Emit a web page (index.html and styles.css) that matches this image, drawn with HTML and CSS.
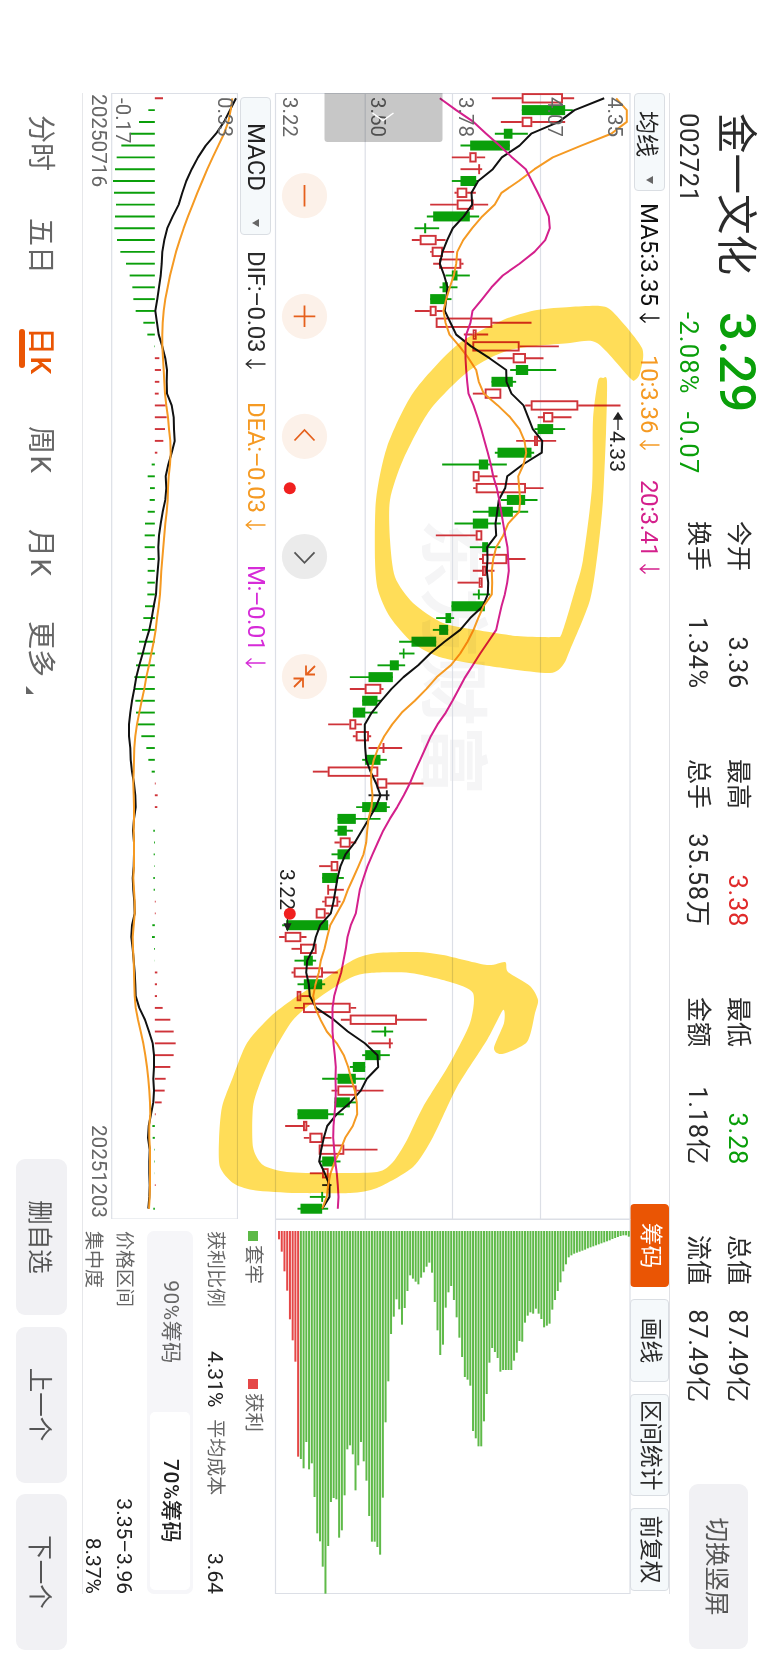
FILE: index.html
```html
<!DOCTYPE html>
<html lang="zh-CN">
<head>
    <meta charset="UTF-8">
    <meta name="viewport" content="width=device-width, initial-scale=1.0">
    <title>金一文化 002721</title>
    <link rel="stylesheet" href="styles.css">
</head>
<body>
<div class="phone">
<div class="screen">

    <header class="header">
        <div class="stock">
            <div class="stock-name">金一文化</div>
            <div class="stock-code">002721</div>
        </div>
        <div class="price">
            <div class="price-now">3.29</div>
            <div class="price-change"><span>-2.08%</span><span>-0.07</span></div>
        </div>
        <div class="quotes">
            <div class="quote"><span>今开</span><b>3.36</b></div>
            <div class="quote"><span>最高</span><b class="up">3.38</b></div>
            <div class="quote"><span>最低</span><b class="down">3.28</b></div>
            <div class="quote"><span>总值</span><b>87.49亿</b></div>
            <div class="quote"><span>换手</span><b>1.34%</b></div>
            <div class="quote"><span>总手</span><b>35.58万</b></div>
            <div class="quote"><span>金额</span><b>1.18亿</b></div>
            <div class="quote"><span>流值</span><b>87.49亿</b></div>
        </div>
        <button class="btn btn-switch">切换竖屏</button>
    </header>

    <div class="toolbar">
        <div class="picker picker-ma">均线<i class="caret"></i></div>
        <div class="ind ind-ma5">MA5:3.35<svg class="arrow" viewBox="0 0 10 20"><path d="M5 0V19M.5 14L5 19.3L9.5 14"/></svg></div>
        <div class="ind ind-ma10">10:3.36<svg class="arrow" viewBox="0 0 10 20"><path d="M5 0V19M.5 14L5 19.3L9.5 14"/></svg></div>
        <div class="ind ind-ma20">20:3.41<svg class="arrow" viewBox="0 0 10 20"><path d="M5 0V19M.5 14L5 19.3L9.5 14"/></svg></div>
        <div class="tools">
            <div class="tool tool-on">筹码</div>
            <div class="tool">画线</div>
            <div class="tool tool-wide">区间统计</div>
            <div class="tool">前复权</div>
        </div>
    </div>

    <div class="main">
        <svg id="priceChart" class="price-chart" viewBox="93 137.5 1126 355">
            <text class="watermark" x="519" y="340">东方财富</text>
            <path class="grid" d="M93 137.5H1219M93 227H1219M93 315H1219M93 402.3H1219M93 492H1219M93.5 137V492M1219 137V492"/>
            <g id="candles"></g>
            <g class="axis">
                <text x="97" y="159.3">4.35</text>
                <text x="97" y="220">4.07</text>
                <text x="97" y="309">3.78</text>
                <text x="97" y="397">3.50</text>
                <text x="97" y="485">3.22</text>
            </g>
            <path class="handle" d="M93 325H139Q142 325 142 328V440Q142 443 139 443H93Z"/>
            <path class="handle-mark" d="M113 374L120.5 384.5L113 395"/>
            <g class="mark">
                <path d="M430 149.5H414M419 145.5L413 149.5L419 153.5Z"/>
                <text x="431" y="157.5">4.33</text>
                <text x="869" y="488">3.22</text>
                <path d="M914 480H926M924 477L930 480L924 483Z"/>
            </g>
            <circle class="dot" cx="488.3" cy="477.7" r="6"/>
            <circle class="dot" cx="913.7" cy="477.7" r="6"/>
            <g class="zoom-btn">
                <circle cx="195.7" cy="463" r="22.6"/><path d="M185 463H206.5"/>
                <circle cx="316.3" cy="463" r="22.6"/><path d="M305.5 463H327M316.3 452.2V473.8"/>
                <circle cx="436.3" cy="463" r="22.6"/><path d="M440.5 453L430 463L440.5 473"/>
                <circle cx="676.5" cy="463" r="22.6"/><path d="M666 452.5L674.5 461M674.5 452.5V461.5H665.5M687 473.5L678.5 465M678.5 474V464.5H687.5"/>
            </g>
            <g class="zoom-btn zoom-btn-off">
                <circle cx="556.5" cy="463" r="22.6"/><path d="M552.3 453L562.8 463L552.3 473"/>
            </g>
        </svg>
        <svg id="chipChart" class="chip-chart" viewBox="1219 137.5 375 355">
            <path class="grid" d="M1219.5 137V492H1593.5V137.5H1219"/>
            <g id="chips"></g>
        </svg>
    </div>

    <div class="lower">
        <div class="macd">
            <div class="macd-bar">
                <div class="picker picker-macd">MACD<i class="caret"></i></div>
                <div class="ind ind-dif">DIF:–0.03<svg class="arrow" viewBox="0 0 10 20"><path d="M5 0V19M.5 14L5 19.3L9.5 14"/></svg></div>
                <div class="ind ind-dea">DEA:–0.03<svg class="arrow" viewBox="0 0 10 20"><path d="M5 0V19M.5 14L5 19.3L9.5 14"/></svg></div>
                <div class="ind ind-m">M:–0.01<svg class="arrow" viewBox="0 0 10 20"><path d="M5 0V19M.5 14L5 19.3L9.5 14"/></svg></div>
            </div>
            <svg id="macdChart" class="macd-chart" viewBox="93 530 1126 127">
                <path class="grid" d="M93.5 530.5H1219V656.3H93.5Z"/>
                <g id="macdBars"></g>
                <g class="axis">
                    <text x="97" y="550.5">0.33</text>
                    <text x="98" y="652">-0.17</text>
                </g>
            </svg>
            <div class="dates"><span>20250716</span><span>20251203</span></div>
        </div>
        <div class="chips-info">
            <div class="legend"><span class="lg lg-green">套牢</span><span class="lg lg-red">获利</span></div>
            <div class="info-row info-pair">
                <span>获利比例</span><b>4.31%</b><span>平均成本</span><b>3.64</b>
            </div>
            <div class="segment"><span>90%筹码</span><span class="segment-on">70%筹码</span></div>
            <div class="info-row"><span>价格区间</span><b>3.35–3.96</b></div>
            <div class="info-row info-last"><span>集中度</span><b>8.37%</b></div>
        </div>
    </div>

    <footer class="footer">
        <nav class="tabs">
            <span>分时</span>
            <span>五日</span>
            <span class="tab-on">日K</span>
            <span>周K</span>
            <span>月K</span>
            <span class="tab-more">更多</span>
        </nav>
        <div class="actions">
            <button class="btn">删自选</button>
            <button class="btn">上一个</button>
            <button class="btn">下一个</button>
        </div>
    </footer>

    <svg id="marker" class="marker" viewBox="0 0 1663 768"></svg>
</div>
</div>
<script src="chart.js"></script>
</body>
</html>
```
FILE: styles.css
```css
* {
    box-sizing: border-box;
}
body {
    margin: 0;
    background: #fff;
    font-family: Roboto, "Noto Sans CJK SC", sans-serif;
    color: #2b2b2b;
}
b {
    font-weight: 400;
}
.phone {
    width: 768px;
    height: 1663px;
    overflow: hidden;
}
/* landscape screen on a portrait page */
.screen {
    position: relative;
    width: 1663px;
    height: 768px;
    transform-origin: 0 0;
    transform: translateX(768px) rotate(90deg);
}

.header {
    display: flex;
    height: 98px;
    padding-left: 113px;
    white-space: nowrap;
}
.stock {
    width: 199px;
}
.stock-name {
    height: 62px;
    font-size: 40.5px;
    line-height: 65px;
}
.stock-code {
    font-size: 25.5px;
    line-height: 34px;
    letter-spacing: .6px;
}
.price {
    width: 210px;
    color: #0a9f0a;
}
.price-now {
    height: 62px;
    font-size: 50.5px;
    font-weight: 500;
    line-height: 61px;
}
.price-change {
    display: flex;
    gap: 17px;
    font-size: 25.5px;
    line-height: 34px;
    letter-spacing: 1.2px;
}
.quotes {
    display: grid;
    grid-template-columns: repeat(4, 168px);
    grid-template-rows: 40px 40px;
    column-gap: 70px;
    margin-left: -1px;
    padding-top: 10px;
}
.quote {
    display: flex;
    justify-content: space-between;
    font-size: 25px;
    line-height: 40px;
}
.quote b {
    font-size: 25.5px;
    letter-spacing: .7px;
}
.up {
    color: #e02b2b;
}
.down {
    color: #0a9f0a;
}
.btn {
    width: 156px;
    height: 51px;
    padding: 0;
    border: none;
    border-radius: 9px;
    background: #f1f1f4;
    color: #555;
    font-family: inherit;
    font-size: 24.5px;
}
.btn-switch {
    width: 165px;
    height: 59px;
    margin: 20px 0 0 81px;
}

.toolbar {
    display: flex;
    width: 1501px;
    height: 39.5px;
    margin-left: 93px;
    padding-top: 4px;
    border-top: 1px solid #e0e1e5;
    font-size: 24px;
}
.picker {
    display: flex;
    align-items: center;
    height: 31px;
    border: 1px solid #dadee3;
    border-radius: 4px;
    background: #f5f9fb;
    color: #222;
}
.picker-ma {
    width: 98px;
    padding-left: 17px;
    font-size: 23px;
}
.picker-macd {
    width: 138px;
    margin-left: 4px;
    padding-left: 25px;
}
.caret {
    margin-left: 19px;
    border: 4px solid transparent;
    border-top: 7px solid #666;
    border-bottom: 0;
}
.picker-macd .caret {
    margin-left: 28px;
}
.ind {
    display: flex;
    align-items: center;
    height: 31px;
    white-space: nowrap;
}
.arrow {
    width: 10px;
    height: 21px;
    margin-left: 7px;
    fill: none;
    stroke: currentColor;
    stroke-width: 1.3;
}
.ind-ma5 {
    width: 152px;
    margin-left: 12px;
    color: #111;
}
.ind-ma10 {
    width: 125px;
    color: #f59a23;
    letter-spacing: -.2px;
}
.ind-ma20 {
    width: 100px;
    color: #d4208c;
    letter-spacing: -.4px;
}
.tools {
    display: flex;
    gap: 12px;
    margin: -4px 3px 0 auto;
}
.tool {
    width: 83px;
    height: 39px;
    border: 1px solid #dadee3;
    border-radius: 4px;
    background: #f5f9fb;
    font-size: 22.7px;
    line-height: 36px;
    text-align: center;
}
.tool-wide {
    width: 102px;
}
.tool-on {
    border-color: #ea5504;
    background: #ea5504;
    color: #fff;
}

.main {
    display: flex;
    height: 355px;
    margin-left: 93px;
}
.price-chart {
    width: 1126px;
    height: 355px;
    overflow: visible;
}
.chip-chart {
    width: 375px;
    height: 355px;
    overflow: visible;
}
.grid {
    fill: none;
    stroke: #dcdfe6;
    stroke-width: 1.2;
}
.axis text {
    fill: #666;
    font-size: 20.5px;
}
.watermark {
    fill: #f5f5f6;
    font-size: 69px;
    font-weight: 700;
}
.handle {
    fill: rgba(0, 0, 0, .22);
}
.handle-mark {
    fill: none;
    stroke: #fff;
    stroke-width: 1.5;
}
.mark text {
    fill: #222;
    font-size: 21px;
}
.mark path {
    fill: #222;
    stroke: #222;
    stroke-width: 1.3;
}
.dot {
    fill: #f0201f;
}
.zoom-btn circle {
    fill: #fcf1e9;
}
.zoom-btn path {
    fill: none;
    stroke: #e5601c;
    stroke-width: 1.8;
}
.zoom-btn-off circle {
    fill: #ebebeb;
}
.zoom-btn-off path {
    stroke: #555;
}
.wick, .hollow {
    fill: none;
    stroke-width: 1.9;
}
.c-r {
    stroke: #cf3339;
}
.c-g {
    stroke: #0a9f0a;
}
.c-k {
    stroke: #222;
}
.solid {
    fill: #0a9f0a;
}
.line {
    fill: none;
    stroke-width: 2;
    stroke-linejoin: round;
}
.line-black {
    stroke: #111;
}
.line-orange {
    stroke: #f59a23;
}
.line-pink {
    stroke: #d4208c;
}
.chip-g {
    fill: #5fba49;
}
.chip-r {
    fill: #e54747;
}

.lower {
    display: flex;
    width: 1501px;
    height: 193px;
    margin-left: 93px;
    border-bottom: 1px solid #e6e7ea;
}
.macd {
    width: 1126px;
}
.macd-bar {
    display: flex;
    height: 37.5px;
    padding-top: 4px;
    font-size: 24px;
}
.ind-dif {
    width: 151px;
    margin-left: 16px;
    letter-spacing: -.3px;
}
.ind-dea {
    width: 163px;
    color: #f59a23;
    letter-spacing: -.3px;
}
.ind-m {
    color: #d62bd8;
    letter-spacing: -.5px;
}
.macd-chart {
    display: block;
    width: 1126px;
    height: 127px;
}
.dates {
    display: flex;
    justify-content: space-between;
    padding: 0 1px;
    color: #666;
    font-size: 20.7px;
    line-height: 25px;
}
.chips-info {
    width: 375px;
    padding-left: 12px;
    color: #666;
    font-size: 19px;
}
.legend {
    display: flex;
    height: 42px;
}
.lg {
    width: 148px;
    font-size: 19.5px;
    line-height: 43px;
}
.lg::before {
    content: "";
    display: inline-block;
    width: 10px;
    height: 10px;
    margin-right: 4px;
    vertical-align: 1px;
}
.lg-green::before {
    background: #5cb947;
}
.lg-red::before {
    background: #e54747;
}
.info-row {
    display: flex;
    justify-content: space-between;
    line-height: 32px;
    height: 31px;
}
.info-row b {
    color: #222;
    font-size: 21px;
}
.info-pair {
    height: 40px;
    line-height: 36px;
}
.info-pair b:nth-child(2) {
    margin: 0 12px 0 44px;
}
.info-pair b:last-child {
    margin-left: auto;
}
.segment {
    display: grid;
    grid-template-columns: 180px 178px;
    height: 46px;
    margin-bottom: 7px;
    padding: 3px 0 3px 1px;
    border-radius: 7px;
    background: #f6f6f9;
    font-size: 21px;
    letter-spacing: .5px;
    line-height: 39px;
    text-align: center;
}
.segment-on {
    border-radius: 5px;
    background: #fff;
    color: #222;
    font-weight: 500;
}

.footer {
    display: flex;
    justify-content: space-between;
    height: 83px;
    padding-right: 13px;
}
.tabs {
    display: flex;
    padding-left: 115px;
    color: #666;
    font-size: 28px;
    line-height: 83px;
}
.tabs span {
    width: 103px;
}
.tabs span:nth-child(2) {
    width: 109px;
}
.tabs span:nth-child(3) {
    width: 99px;
}
.tabs span:nth-child(5) {
    width: 92px;
}
.tabs span:nth-child(n+3):nth-child(-n+5) {
    letter-spacing: 1.5px;
}
.tabs .tab-on {
    position: relative;
    color: #ea5504;
    font-weight: 500;
}
.tab-on::after {
    content: "";
    position: absolute;
    left: 2px;
    top: 57px;
    width: 39px;
    height: 6px;
    border-radius: 3px;
    background: #ea5504;
}
.tab-more::after {
    content: "";
    display: inline-block;
    margin-left: 9px;
    border-bottom: 8px solid #666;
    border-left: 8px solid transparent;
    vertical-align: -5px;
}
.actions {
    display: flex;
    gap: 11.5px;
    padding-top: 15px;
}
/* highlighter drawing over the charts */
.marker {
    position: absolute;
    left: 0;
    top: 0;
    width: 1663px;
    height: 768px;
    mix-blend-mode: multiply;
    pointer-events: none;
}
.marker path {
    fill: #ffdd58;
    fill-rule: evenodd;
}
```
FILE: chart.js
```javascript
const NS = "http://www.w3.org/2000/svg";

// one entry per day: colour, low, body bottom, body top, high
const days = [
    ["r",667,757,880,914],["g",757,757,887,910],["r",694,757,788,887],["g",676,703,729,775],["g",573,602,721,721],
    ["r",547,600,621,647],["r",573,629,629,638],["g",547,573,620,628],["r",555,562,593,619],["r",482,562,612,656],
    ["g",472,491,601,629],["g",435,464,470,509],["r",427,451,501,528],["r",482,487,520,554],["r",491,509,575,582],
    ["g",528,547,564,601],["g",510,519,535,564],["g",482,482,528,546],["r",436,481,501,519],["r",499,499,668,786],
    ["r",583,610,621,656],["r",609,609,750,868],["r",684,730,769,822],["g",722,739,776,860],["g",666,666,730,740],
    ["r",610,646,695,695],["r",767,784,926,1053],["r",805,821,851,906],["g",795,804,851,887],["r",740,794,805,860],
    ["g",676,684,786,794],["g",518,628,656,712],["r",610,610,630,684],["r",611,619,769,822],["g",694,712,767,804],
    ["g",610,657,730,776],["g",555,610,656,694],["r",499,619,638,638],["g",601,638,656,693],["r",629,638,713,768],
    ["r",610,638,650,675],["r",564,628,639,639],["g",610,628,628,662],["g",546,546,646,646],["g",500,528,545,554],
    ["g",490,509,536,536],["g",389,426,500,500],["g",389,400,405,435],["g",324,361,388,407],["g",241,297,370,370],
    ["r",241,286,335,342],["g",278,278,324,336],["g",250,250,287,324],["r",176,240,260,277],["r",250,259,298,305],
    ["r",297,342,342,398],["g",278,287,333,352],["r",130,175,326,326],["r",322,322,353,462],["k",297,352,352,360],
    ["g",260,278,352,361],["g",204,204,259,333],["g",195,204,232,250],["r",195,211,243,260],["g",186,204,241,241],
    ["r",149,184,206,206],["g",158,158,204,223],["r",176,176,176,223],["r",158,166,206,213],["r",139,139,168,180],
    ["g",38,50,176,176],["r",29,46,95,111],["r",66,92,141,141],["g",75,103,130,140],["r",66,73,160,205],
    ["g",84,103,158,167],["r",82,82,95,120],["r",75,101,243,260],["r",214,241,382,472],["g",306,344,350,371],
    ["r",296,361,361,370],["g",278,287,333,361],["g",241,250,287,287],["g",158,204,259,287],["r",186,204,261,342],
    ["g",195,195,241,260],["g",84,84,176,223],["r",47,101,113,120],["r",103,120,159,186],["r",148,148,224,324],
    ["g",149,158,195,213],["r",121,158,177,177],["k",158,176,176,186],["g",121,158,158,168],["g",84,93,158,176]
];

const ma5 = [1004,915,868,785,750,697,670,626,606,608,583,550,533,519,511,524,534,530,526,543,560,605,660,710,711,
    726,762,776,790,818,817,760,713,707,688,683,678,680,653,654,652,656,655,640,602,572,525,482,446,402,366,335,307,
    286,286,287,290,303,320,333,319,298,277,256,228,213,204,198,192,184,152,139,131,113,110,118,121,140,193,235,286,
    324,326,292,274,242,202,173,163,155,149,166,180,180,158];
const ma10 = [1040,1072,1072,1025,935,850,795,748,696,676,638,608,581,563,560,553,541,530,522,528,540,570,597,620,628,
    643,685,722,750,765,770,762,746,749,752,749,716,701,680,671,667,668,667,642,626,612,594,572,544,502,471,436,397,
    368,344,326,313,305,305,309,306,297,293,290,282,267,251,235,222,202,182,173,165,154,148,138,131,137,153,172,202,
    223,236,245,256,262,263,250,227,213,196,183,176,172,158];
const ma20 = [511,560,612,650,690,728,769,787,805,822,838,841,827,795,750,700,666,638,609,603,590,588,588,590,593,
    597,612,624,635,645,655,664,671,682,689,695,701,707,714,716,718,713,706,696,688,680,656,632,610,587,568,549,529,
    504,484,468,452,436,421,403,383,361,341,325,309,294,282,271,265,259,244,234,229,222,215,204,194,189,189,189,192,
    196,199,198,199,198,195,192,191,194,197,202,205,207,205];

const macd = [489,445,417,389,364,350,345,339,342,348,345,343,351,361,378,389,397,400,407,430,442,463,478,483,478,
    476,497,500,495,490,472,455,443,450,449,443,435,434,434,443,443,442,442,435,430,426,417,412,408,403,403,406,408,
    413,424,439,445,455,467,473,472,465,460,462,461,463,460,461,467,467,457,456,462,464,472,471,471,488,511,521,527,
    521,511,497,494,485,467,457,458,463,463,464,467,465,460];
const dif = [708,690,672,648,617,594,575,559,547,536,518,502,493,487,485,482,477,472,466,471,476,487,496,501,500,
    501,515,521,522,524,515,505,497,499,496,488,482,477,475,476,473,470,468,461,455,448,437,428,418,409,403,396,391,
    387,387,391,392,396,402,406,407,402,399,402,402,401,398,400,403,404,396,394,398,401,404,406,407,418,435,447,458,
    462,462,460,462,460,453,446,444,449,448,448,449,448,445];
const dea = [697,692,685,672,655,638,622,607,592,578,564,551,539,528,519,510,503,496,491,488,487,487,489,491,493,
    495,499,504,507,511,512,510,506,504,503,500,496,493,490,487,484,482,480,476,471,467,461,454,447,439,433,425,418,
    411,406,403,402,401,400,401,402,402,401,402,402,402,400,402,404,404,401,398,399,401,402,403,404,407,414,422,430,
    436,441,445,448,450,451,448,448,450,450,450,450,449,447];

const chips = [88,125,184,242,328,391,455,740,747,775,696,778,760,861,970,994,1070,1151,1008,876,864,868,983,961,856,
    718,706,733,841,766,696,754,812,918,995,995,1011,1034,863,637,514,372,320,268,298,344,294,243,196,206,215,223,
    203,187,170,158,188,276,361,435,404,293,247,228,270,322,383,441,501,509,527,663,685,709,709,634,552,458,414,426,
    444,485,480,480,480,480,452,428,393,395,338,317,307,311,296,311,327,352,347,341,299,270,243,217,184,163,142,136,
    131,128,125,122,119,115,112,109,106,103,100,97,94,91,87,84,81,78,76,76,80];

// outlines of the two highlighter loops, [height, time]
const loop1 = [[635,380],[640,373],[642,348],[613,312],[600,306],[570,307],[537,310],[503,320],[457,345],[413,393],
    [387,447],[376,500],[375,560],[378,590],[390,617],[413,643],[443,658],[503,668],[550,673],[563,665],[570,650],
    [590,600],[598,550],[603,500],[606,433],[607,381],[603,378],[598,381],[593,420],[592,487],[583,560],[575,590],
    [562,633],[555,637],[517,636],[477,630],[443,623],[413,603],[395,577],[390,540],[390,500],[403,460],[430,410],
    [470,370],[510,350],[570,343],[597,343],[630,378]];
const loop2 = [[505,962],[487,965],[443,955],[417,952],[377,953],[353,960],[323,980],[293,999],[270,1017],[247,1043],
    [233,1077],[222,1107],[219,1140],[220,1167],[233,1183],[253,1190],[297,1193],[350,1193],[377,1188],[413,1167],
    [433,1137],[457,1087],[487,1040],[503,1010],[504,1023],[494,1048],[502,1054],[527,1042],[535,1013],[538,1000],
    [530,986],[508,972]];
const hole2 = [[473,993],[450,982],[410,973],[370,973],[350,978],[320,997],[293,1020],[273,1053],[260,1083],
    [253,1107],[253,1147],[263,1165],[287,1172],[327,1173],[377,1172],[393,1162],[407,1140],[423,1107],[450,1063],
    [470,1023]];

const dayX = i => 98.3 + i * 11.813;
const priceY = v => 498 - v / 3;
const macdY = v => 768 - v / 3;

function add(parent, tag, cls, attrs) {
    const el = document.createElementNS(NS, tag);
    if (cls) el.setAttribute("class", cls);
    for (const k in attrs) el.setAttribute(k, attrs[k]);
    parent.appendChild(el);
}

function drawLine(parent, data, toY, cls) {
    const points = data.map((v, i) => dayX(i).toFixed(1) + "," + toY(v).toFixed(1)).join(" ");
    add(parent, "polyline", "line " + cls, { points });
}

// closed smooth curve through the points
function smooth(list) {
    const p = list.map(([h, t]) => [t, 768 - h]);
    const n = p.length;
    let d = `M${p[0]}`;
    for (let i = 0; i < n; i++) {
        const a = p[(i + n - 1) % n], b = p[i], c = p[(i + 1) % n], e = p[(i + 2) % n];
        d += `C${b[0] + (c[0] - a[0]) / 8} ${b[1] + (c[1] - a[1]) / 8} ${c[0] - (e[0] - b[0]) / 8} ${c[1] - (e[1] - b[1]) / 8} ${c[0]} ${c[1]}`;
    }
    return d + "Z";
}

const candles = document.getElementById("candles");
days.forEach(([c, low, bottom, top, high], i) => {
    const x = dayX(i);
    if (c === "r" && top > bottom) {
        add(candles, "path", "wick c-r", { d: `M${x} ${priceY(low)}V${priceY(bottom)}M${x} ${priceY(top)}V${priceY(high)}` });
        add(candles, "rect", "hollow c-r", { x: x - 4.2, y: priceY(top) + .8, width: 8.4, height: Math.max((top - bottom) / 3 - 1.6, 1) });
        return;
    }
    add(candles, "path", "wick c-" + c, { d: `M${x} ${priceY(low)}V${priceY(high)}` });
    if (top > bottom) {
        add(candles, "rect", "solid", { x: x - 5, y: priceY(top), width: 10, height: (top - bottom) / 3 });
    } else {
        add(candles, "path", "wick c-" + c, { d: `M${x - 5} ${priceY(top)}H${x + 5}` });
    }
});
drawLine(candles, ma5, priceY, "line-black");
drawLine(candles, ma10, priceY, "line-orange");
drawLine(candles, ma20, priceY, "line-pink");

const bars = document.getElementById("macdBars");
macd.forEach((v, i) => {
    if (v !== 465) {
        add(bars, "path", "wick " + (v > 465 ? "c-r" : "c-g"), { d: `M${dayX(i)} ${macdY(464.5)}V${macdY(v)}` });
    }
});
drawLine(bars, dif, macdY, "line-black");
drawLine(bars, dea, macdY, "line-orange");

const chipBox = document.getElementById("chips");
chips.forEach((v, i) => {
    add(chipBox, "rect", i < 8 ? "chip-r" : "chip-g", { x: 1231, y: 487.5 - i * 2.733, width: (v - 63) / 3, height: 2 });
});

const marker = document.getElementById("marker");
add(marker, "path", "", { d: smooth(loop1) });
add(marker, "path", "", { d: smooth(loop2) + smooth(hole2) });
```
